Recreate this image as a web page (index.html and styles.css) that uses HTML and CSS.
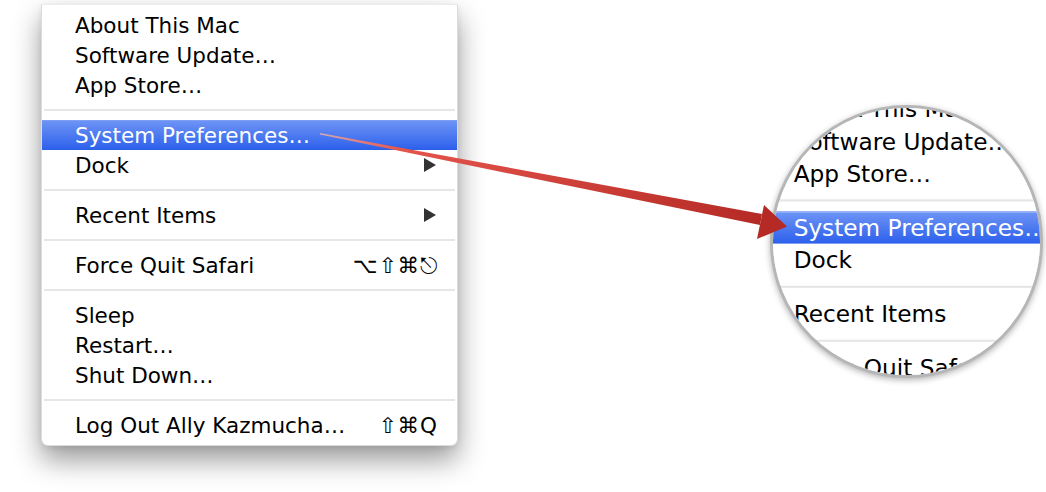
FILE: index.html
```html
<!DOCTYPE html>
<html lang="en">
<head>
    <meta charset="UTF-8">
    <title>Apple Menu - System Preferences</title>
    <link rel="stylesheet" href="styles.css">
</head>
<body>

<div class="scene">
    <div class="menu" id="apple-menu">
        <div class="group">
            <div class="item"><span>About This Mac</span></div>
            <div class="item"><span>Software Update…</span></div>
            <div class="item"><span>App Store…</span></div>
        </div>
        <div class="sep"></div>
        <div class="group">
            <div class="item selected"><span>System Preferences…</span></div>
            <div class="item"><span>Dock</span><i class="sub"></i></div>
        </div>
        <div class="sep"></div>
        <div class="group">
            <div class="item"><span>Recent Items</span><i class="sub"></i></div>
        </div>
        <div class="sep"></div>
        <div class="group">
            <div class="item"><span>Force Quit Safari</span><span class="keys">⌥⇧⌘⎋</span></div>
        </div>
        <div class="sep"></div>
        <div class="group">
            <div class="item"><span>Sleep</span></div>
            <div class="item"><span>Restart…</span></div>
            <div class="item"><span>Shut Down…</span></div>
        </div>
        <div class="sep"></div>
        <div class="group">
            <div class="item"><span>Log Out Ally Kazmucha…</span><span class="keys">⇧⌘Q</span></div>
        </div>
    </div>

    <!-- magnified copy of the menu, filled in below -->
    <div class="lens" id="lens"></div>

    <svg class="pointer" width="1046" height="492" viewBox="0 0 1046 492">
        <defs>
            <linearGradient id="shaft" gradientUnits="userSpaceOnUse" x1="320" y1="134" x2="762" y2="220">
                <stop offset="0" stop-color="#d8a8b4"/>
                <stop offset="0.18" stop-color="#e4554c"/>
                <stop offset="1" stop-color="#b52a25"/>
            </linearGradient>
        </defs>
        <polygon points="320,133 762,214 760,225 320,134.6" fill="url(#shaft)"/>
        <polygon points="764,205 787,226.5 757,239" fill="#b52a25"/>
    </svg>
</div>

<script>
    const menu = document.getElementById("apple-menu");
    const copy = menu.cloneNode(true);
    copy.removeAttribute("id");
    copy.classList.add("zoomed");
    document.getElementById("lens").appendChild(copy);
</script>

</body>
</html>
```

FILE: styles.css
```css
body {
    font-family: 'DejaVu Sans', 'Liberation Sans', sans-serif;
    margin: 0;
    padding: 0;
    background: #fff;
    color: #000;
}

.scene {
    position: relative;
    width: 1046px;
    height: 492px;
    overflow: hidden;
}

.menu {
    width: 417px;
    margin: 4px 0 0 41px;
    padding: 5px 0;
    background: #fff;
    border: 1px solid #dcdcdc;
    border-top-color: #ececec;
    border-radius: 0 0 7px 7px;
    box-shadow: 0 14px 28px rgba(0, 0, 0, 0.4), 0 2px 6px rgba(0, 0, 0, 0.08);
    box-sizing: border-box;
}

.item {
    height: 30px;
    padding: 0 19px 0 33px;
    display: flex;
    justify-content: space-between;
    align-items: center;
    font-size: 21.5px;
    white-space: nowrap;
}

.item.selected {
    background: linear-gradient(#6d93f5, #2c60ec);
    border-top: 1px solid #7f9ff5;
    color: #fff;
    box-sizing: border-box;
}

.sep {
    height: 2px;
    margin: 9px 2px;
    background: #e6e6e6;
}

.sub {
    width: 0;
    height: 0;
    margin-right: 2px;
    border-left: 12px solid #333;
    border-top: 7px solid transparent;
    border-bottom: 7px solid transparent;
}

.keys {
    letter-spacing: 1px;
}

.lens {
    position: absolute;
    left: 770px;
    top: 105px;
    width: 273px;
    height: 273px;
    border-radius: 50%;
    overflow: hidden;
    background: #fff;
    border: 3px solid #b6b6b6;
    box-shadow: 0 2px 6px rgba(0, 0, 0, 0.3), inset 0 0 5px rgba(0, 0, 0, 0.18);
    box-sizing: border-box;
}

.menu.zoomed {
    position: absolute;
    left: -15px;
    top: -21px;
    margin: 0;
    border: none;
    box-shadow: none;
    transform: scale(1.08);
    transform-origin: 0 0;
}

.pointer {
    position: absolute;
    left: 0;
    top: 0;
}
```
